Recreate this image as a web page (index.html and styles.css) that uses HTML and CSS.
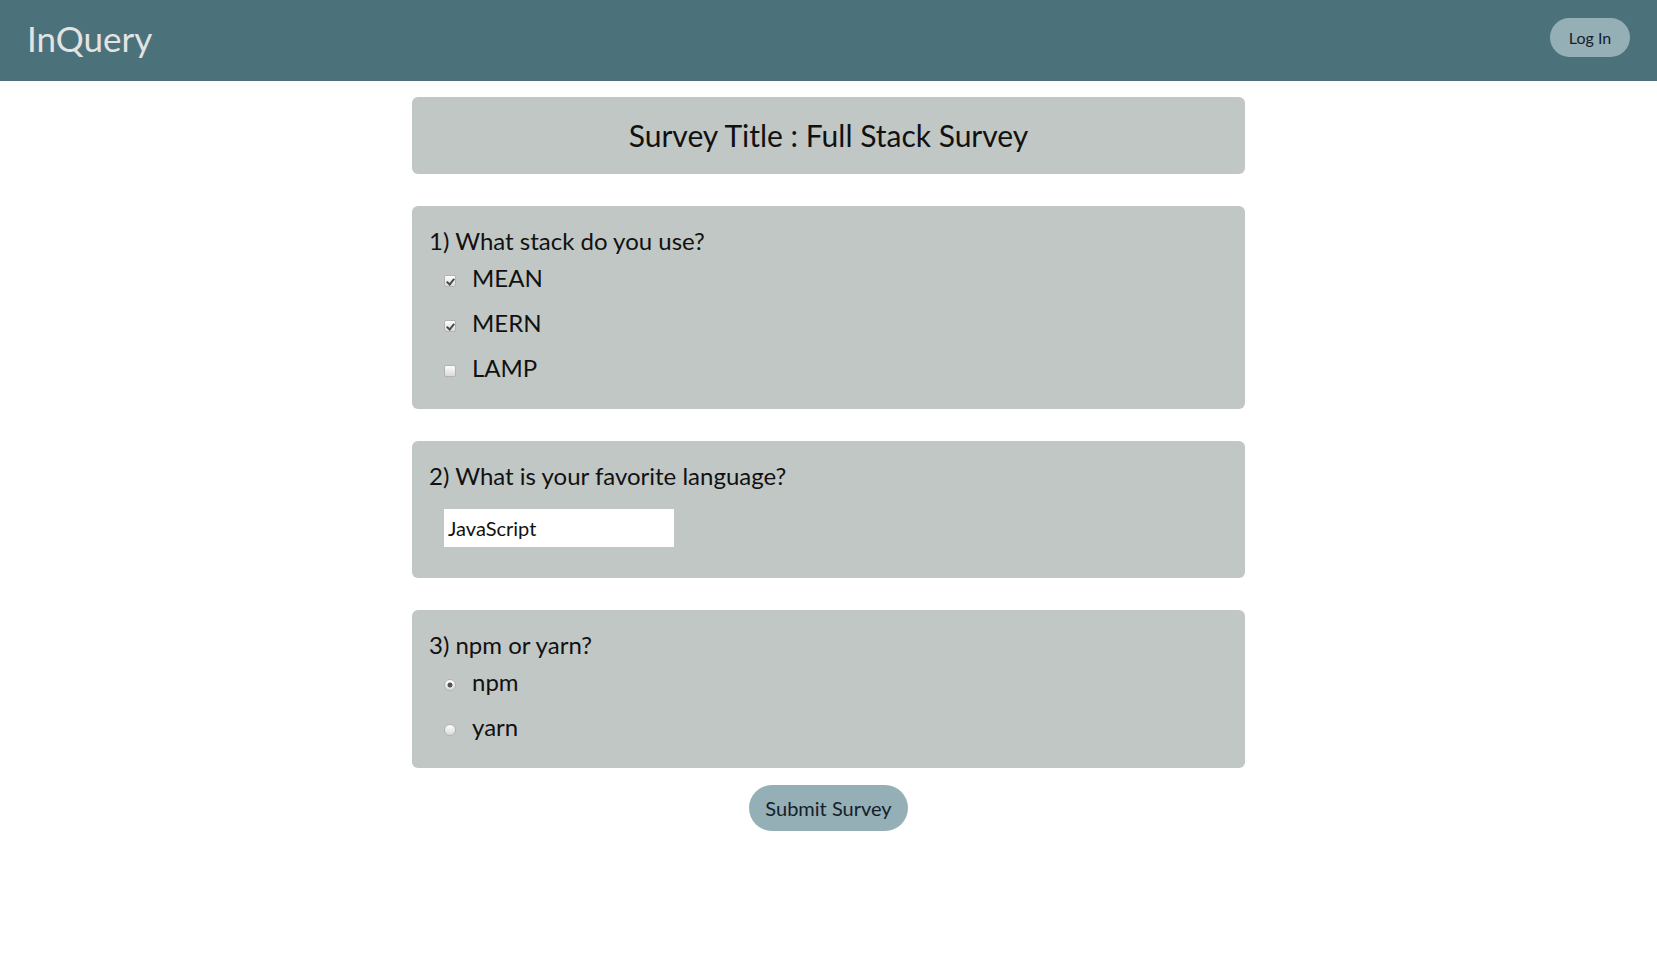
FILE: index.html
```html
<!DOCTYPE html>
<html lang="en">
<head>
<meta charset="utf-8">
<title>InQuery</title>
<link rel="stylesheet" href="styles.css">
</head>
<body>
<header class="topbar">
  <div class="brand">InQuery</div>
  <button class="login-btn" type="button">Log In</button>
</header>
<main class="survey">
  <div class="card title-card">
    <h1 class="survey-title">Survey Title : Full Stack Survey</h1>
  </div>

  <section class="card question">
    <h2 class="q-text">1) What stack do you use?</h2>
    <label class="option"><input type="checkbox" checked><span>MEAN</span></label>
    <label class="option"><input type="checkbox" checked><span>MERN</span></label>
    <label class="option"><input type="checkbox"><span>LAMP</span></label>
  </section>

  <section class="card question">
    <h2 class="q-text">2) What is your favorite language?</h2>
    <input class="text-answer" type="text" value="JavaScript">
  </section>

  <section class="card question">
    <h2 class="q-text">3) npm or yarn?</h2>
    <label class="option"><input type="radio" name="pm" checked><span>npm</span></label>
    <label class="option"><input type="radio" name="pm"><span>yarn</span></label>
  </section>

  <div class="submit-row">
    <button class="submit-btn" type="button">Submit Survey</button>
  </div>
</main>
</body>
</html>
```

FILE: styles.css
```css
* { box-sizing: border-box; }

body {
  margin: 0;
  background: #ffffff;
  font-family: "Lato", "Open Sans", "Noto Sans", sans-serif;
  color: #111;
}

.topbar {
  height: 81px;
  background: #4b717a;
  display: flex;
  justify-content: space-between;
  align-items: flex-start;
  padding: 18px 27px 0 27px;
}

.brand {
  font-size: 35px;
  line-height: 43px;
  margin-top: -1px;
  color: #e3e3e3;
}

.login-btn {
  width: 80px;
  height: 39px;
  border: none;
  border-radius: 20px;
  background: #94afb5;
  color: #14202a;
  font-family: inherit;
  font-size: 16px;
  padding: 0;
}

.survey {
  width: 833px;
  margin: 0 auto;
  padding-top: 16px;
  display: flex;
  flex-direction: column;
}

.card {
  background: #c1c7c5;
  border-radius: 6px;
  margin-bottom: 32px;
}

.title-card {
  height: 77px;
  display: flex;
  justify-content: center;
  align-items: center;
}

.survey-title {
  margin: 0;
  font-size: 30px;
  font-weight: 400;
  line-height: 77px;
}

.question {
  padding: 21px 17px 19px;
  display: flex;
  flex-direction: column;
  align-items: flex-start;
}

.q-text {
  margin: 0;
  font-size: 24px;
  font-weight: 400;
  line-height: 28px;
}

.option {
  display: flex;
  align-items: baseline;
  height: 45px;
  line-height: 45px;
  font-size: 24px;
  padding-left: 15px;
}

.option input {
  appearance: none;
  -webkit-appearance: none;
  margin: 0 16px 0 0;
  width: 12px;
  height: 12px;
  border: 1px solid #b3b3b3;
  background: linear-gradient(#fdfdfd, #dadada);
  position: relative;
  flex: none;
}

.option input[type="checkbox"] {
  border-radius: 2px;
}

.option input[type="checkbox"]:checked::after {
  content: "";
  position: absolute;
  left: 3px;
  top: 1px;
  width: 3px;
  height: 6px;
  border-right: 2px solid #4a4a4a;
  border-bottom: 2px solid #4a4a4a;
  transform: rotate(40deg);
}

.option input[type="radio"] {
  border-radius: 50%;
}

.option input[type="radio"]:checked {
  background: radial-gradient(circle, #555 0 2.2px, transparent 2.8px), linear-gradient(#fdfdfd, #dadada);
}

.text-answer {
  margin: 19px 0 12px 15px;
  width: 230px;
  height: 38px;
  border: none;
  background: #fff;
  padding: 0 4px;
  font-family: inherit;
  font-size: 20px;
  color: #111;
}

.submit-row {
  display: flex;
  justify-content: center;
  margin-top: -15px;
}

.submit-btn {
  width: 159px;
  height: 46px;
  border: none;
  border-radius: 23px;
  background: #94afb5;
  color: #14202a;
  font-family: inherit;
  font-size: 20px;
  padding: 0;
}
```
